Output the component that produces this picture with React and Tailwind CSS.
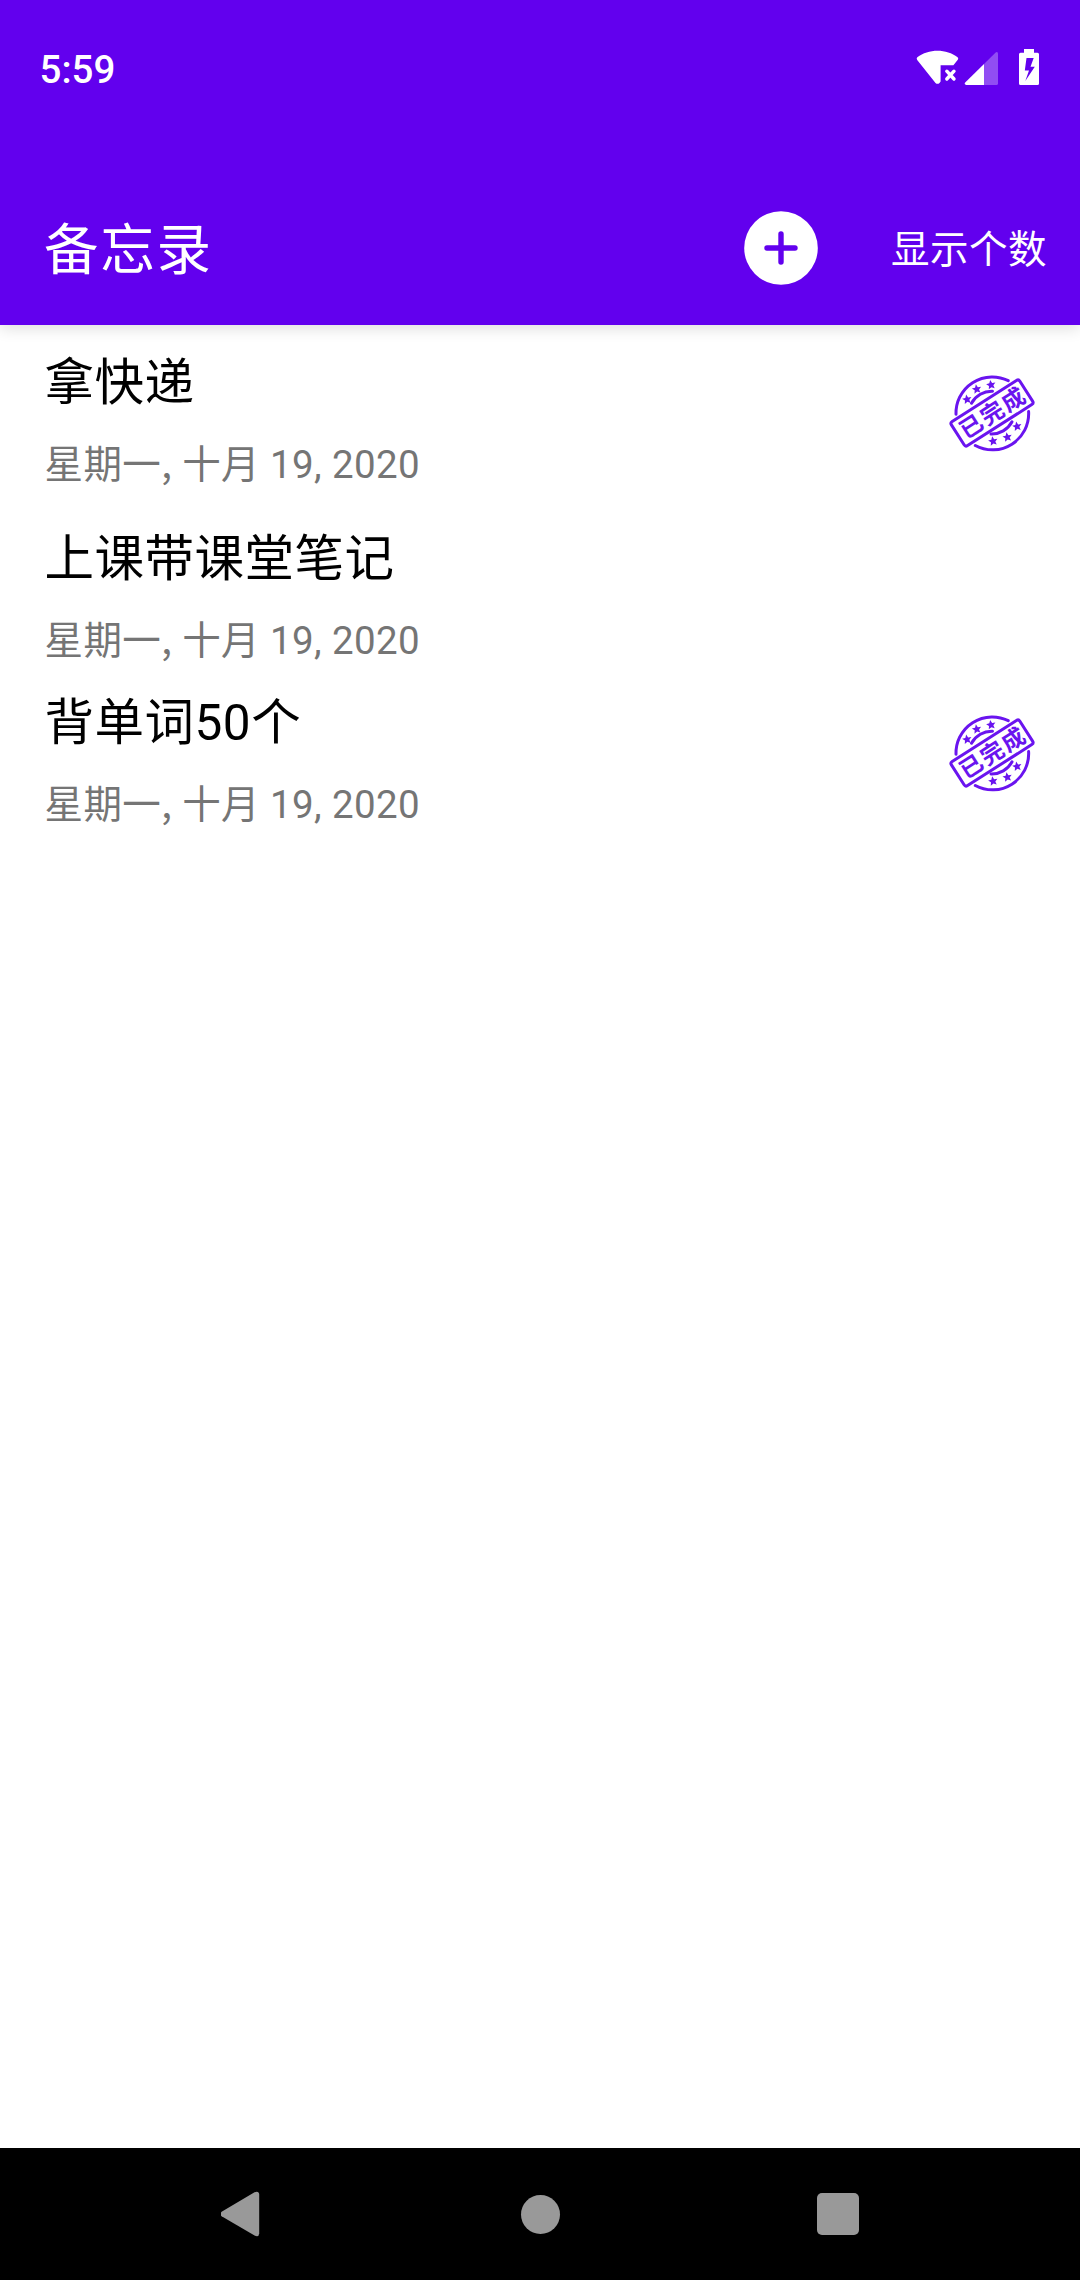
const FONT = "font-['Roboto','Noto_Sans_CJK_SC',sans-serif]";

const STAR = "M0 -4.8L1.4 -1.6L4.7 -1.4L2.2 0.9L3 4.2L0 2.5L-3 4.2L-2.2 0.9L-4.7 -1.4L-1.4 -1.6Z";
const STARS = [
  [37, 39.3],
  [46.7, 29],
  [61, 24.7],
  [63, 81],
  [77.3, 77],
  [87, 66.3],
];

function Stamp() {
  return (
    <svg className="mt-[6px] h-[110px] w-[120px] shrink-0" viewBox="0 0 120 110" fill="none" stroke="#6a14ef" strokeWidth="3" strokeLinecap="round">
      <path d="M26 54.3A36.2 36.2 0 0 1 78.3 20.7" />
      <path d="M98.6 51.5A36.2 36.2 0 0 1 45.3 85.5" />
      <path d="M41.5 43.2A23 23 0 0 1 62.5 31.2" />
      <path d="M61 74A23 23 0 0 0 82 61.8" />
      {STARS.map(([x, y]) => (
        <path key={x} d={STAR} transform={`translate(${x} ${y}) rotate(-10)`} fill="#6a14ef" stroke="none" />
      ))}
      <g transform="translate(62 53) rotate(-32.5)">
        <rect x="-40.6" y="-14.3" width="81.2" height="28.6" rx="2.5" fill="#fff" />
        <text x="1.2" y="8.4" textAnchor="middle" fontSize="23" letterSpacing="1.9" stroke="none" fill="#6a14ef" className="font-['Noto_Sans_CJK_SC',sans-serif] font-bold">
          已完成
        </text>
      </g>
    </svg>
  );
}

function StatusIcons() {
  return (
    <svg className="h-[40px] w-[130px]" viewBox="914 48 130 40" fill="#fff">
      <path d="M917.3 57.2C923 53 930 50.7 937.5 50.7S952 53 957.6 57.2Q958.8 58.4 957.8 59.8L953.4 65.2H940.6V81.5L939.5 82.9Q937.5 84.8 935.5 82.9L917.2 60Q916.1 58.4 917.3 57.2Z" />
      <path d="M946.8 71.2L954 79M954 71.2L946.8 79" stroke="#fff" strokeWidth="3.4" strokeLinecap="round" />
      <path d="M984 64V85H966.2Q963.8 84.4 965.2 82.6Z" />
      <path d="M984 64L995.4 52.7Q997.3 51.2 998 53.4V83.4Q998 85 996.4 85H984Z" fillOpacity=".3" />
      <path fillRule="evenodd" d="M1024 49H1034V52.8H1037.5Q1039 52.8 1039 54.3V83.5Q1039 85 1037.5 85H1020.5Q1019 85 1019 83.5V54.3Q1019 52.8 1020.5 52.8H1024ZM1026.5 58L1024.8 70.5H1029L1025.3 81L1034.8 66.8H1030.5L1033.7 58Z" />
    </svg>
  );
}

function Item({ title, done, className }) {
  return (
    <li className={`flex justify-between pl-[44.5px] pr-[30px] ${className}`}>
      <div>
        <h2 className="text-[49.5px] leading-[58px] tracking-[0.5px] text-black">{title}</h2>
        <p className="mt-[24px] whitespace-pre text-[38.5px] leading-[50px] tracking-[0.4px] text-[#757575]">
          星期一<span className="font-['Noto_Sans_CJK_SC',sans-serif] tracking-[0.8px]">, </span>十月 19, 2020
        </p>
      </div>
      {done && <Stamp />}
    </li>
  );
}

export default function App() {
  return (
    <div className={`flex h-[2280px] w-[1080px] flex-col bg-white ${FONT}`}>
      <header className="flex h-[325px] shrink-0 flex-col bg-[#6200ee] text-white shadow-[0_4px_14px_rgba(0,0,0,0.12)]">
        <div className="flex h-[136px] items-center justify-between pl-[39.5px] pr-[36px]">
          <span className="pt-[3px] text-[38.5px] font-medium">5:59</span>
          <StatusIcons />
        </div>
        <div className="mt-[35px] flex h-[154px] items-center pl-[44px] pr-[33px]">
          <h1 className="pt-[6px] text-[54.5px] tracking-[1.8px]">备忘录</h1>
          <svg className="ml-auto h-[74px] w-[74px]" viewBox="0 0 74 74">
            <circle cx="37" cy="37" r="36.8" fill="#fff" />
            <path d="M37 23V51M23 37H51" stroke="#6200ee" strokeWidth="5.4" strokeLinecap="round" />
          </svg>
          <span className="ml-[73px] pt-[4px] text-[38.5px] tracking-[0.5px]">显示个数</span>
        </div>
      </header>
      <ul className="flex-1 pt-[29px]">
        <Item title="拿快递" done className="h-[176px]" />
        <Item title="上课带课堂笔记" className="h-[164px]" />
        <Item title="背单词50个" done className="h-[176px]" />
      </ul>
      <nav className="flex h-[132px] shrink-0 items-center justify-between bg-black pl-[221px] pr-[221px]">
        <svg className="h-[46px] w-[42px]" viewBox="1 0 42 46" fill="#999">
          <path d="M1.6 20.8L34.5 1.2Q38.9-.5 39.2 3.5V42.5Q38.9 46.2 35 44.8L1.6 25.2Q-.4 23 1.6 20.8Z" />
        </svg>
        <div className="h-[39px] w-[39px] rounded-full bg-[#999]" />
        <div className="h-[42px] w-[42px] rounded-[5px] bg-[#999]" />
      </nav>
    </div>
  );
}
